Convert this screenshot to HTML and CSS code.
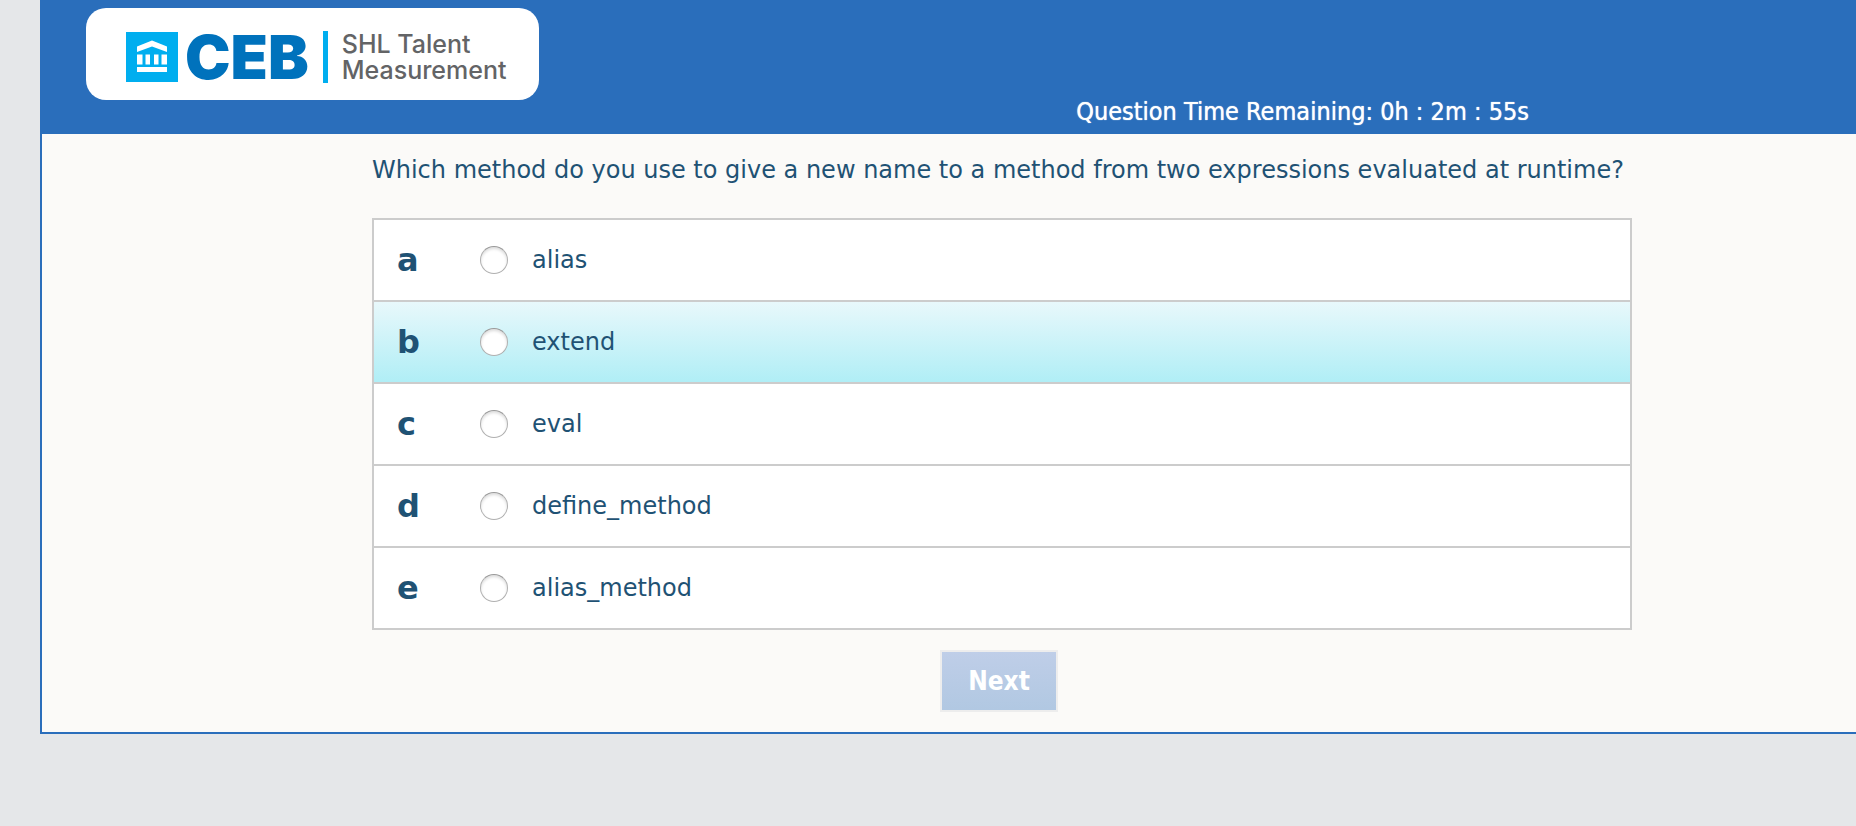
FILE: index.html
```html
<!DOCTYPE html>
<html lang="en">
<head>
<meta charset="utf-8">
<meta name="viewport" content="width=device-width, initial-scale=1">
<title>SHL Talent Measurement</title>
<link rel="stylesheet" href="styles.css">
</head>
<body>
<div class="panel">
  <header class="header">
    <div class="logo">
      <svg class="logo-mark" viewBox="0 0 52 50" aria-hidden="true">
        <rect width="52" height="50" fill="#00aeef"/>
        <g fill="#fff">
          <path d="M11 14.500 26 8.500l15 6V20l-15-5.500L11 20z"/>
          <path d="M11 22.500h5.500v10H11zM19.500 22.500h4.500v10h-4.500zM28 22.500h4.500v10H28zM35.500 22.500H41v10h-5.500zM11 35h30v5H11z"/>
        </g>
      </svg>
      <span class="logo-name">CEB</span>
      <div class="logo-tag"><div>SHL Talent</div><div>Measurement</div></div>
    </div>
    <div class="timer" role="timer">Question Time Remaining: 0h : 2m : 55s</div>
  </header>
  <main>
    <form class="question">
      <p class="prompt" id="prompt">Which method do you use to give a new name to a method from two expressions evaluated at runtime?</p>
      <div class="options" role="radiogroup" aria-labelledby="prompt">
        <label class="option"><b class="letter">a</b><input class="radio" type="radio" name="answer" value="a"><span>alias</span></label>
        <label class="option option-active"><b class="letter">b</b><input class="radio" type="radio" name="answer" value="b"><span>extend</span></label>
        <label class="option"><b class="letter">c</b><input class="radio" type="radio" name="answer" value="c"><span>eval</span></label>
        <label class="option"><b class="letter">d</b><input class="radio" type="radio" name="answer" value="d"><span>define_method</span></label>
        <label class="option"><b class="letter">e</b><input class="radio" type="radio" name="answer" value="e"><span>alias_method</span></label>
      </div>
      <div class="actions"><button class="next" type="submit" disabled>Next</button></div>
    </form>
  </main>
</div>
</body>
</html>
```
FILE: styles.css
```css
* { box-sizing: border-box; }
body {
  margin: 0;
  background: #e5e7e9;
  color: #1f5274;
  font-family: "DejaVu Sans", Verdana, sans-serif;
  font-size: 24px;
  line-height: 32px;
}
.panel {
  margin-left: 40px;
  border: solid #2a6ebb;
  border-width: 0 0 2px 2px;
  background: #fbfaf8;
}
.header {
  display: flex;
  justify-content: space-between;
  align-items: flex-start;
  padding: 8px 327px 6px 44px;
  background: #2a6ebb;
}
.logo {
  display: flex;
  align-items: center;
  height: 92px;
  margin-bottom: 28px;
  padding: 6px 32px 0 40px;
  border-radius: 20px;
  background: #fff;
}
.logo-mark { width: 52px; height: 50px; }
.logo-name {
  margin: 0 14px 0 7px;
  color: #0072bc;
  font: 900 61px/50px Inter, sans-serif;
}
.logo-tag {
  padding-left: 14px;
  border-left: 5px solid #00aeef;
  color: #636466;
  font: 500 25px/26px Inter, sans-serif;
}
.timer {
  align-self: flex-end;
  color: #fff;
  font-family: "DejaVu Sans Condensed", "DejaVu Sans", sans-serif;
  font-size: 25px;
  text-shadow: 0 0 1px #fff;
}
.question { padding: 20px 224px 20px 330px; }
.prompt { margin: 0 0 32px; white-space: nowrap; }
.options { border: 2px solid #ccc; background: #fff; }
.option {
  display: grid;
  grid-template-columns: 83px 28px 1fr;
  align-items: center;
  height: 80px;
  padding-left: 23px;
}
.option > span { padding-left: 24px; }
.option + .option { height: 82px; border-top: 2px solid #ccc; }
.option-active { background: linear-gradient(#e8f8fb, #b0eef6); }
.letter { font-size: 32px; }
.radio {
  appearance: none;
  width: 28px;
  height: 28px;
  margin: 0;
  border: 1px solid #b0b0b0;
  border-top-color: #999;
  border-radius: 50%;
  background: #fff;
  box-shadow: inset 0 2px 3px #ddd;
}
.radio:checked { background: radial-gradient(#1f5274 5px, #fff 6px); }
.actions {
  display: flex;
  justify-content: center;
  padding: 20px 6px 0 0;
}
.next {
  height: 62px;
  padding: 0 26px;
  border: 2px solid #ededed;
  background: linear-gradient(#bfcee8, #b1c8e2);
  color: #fff;
  font: bold 26px/32px "DejaVu Sans Condensed", "DejaVu Sans", sans-serif;
}
```
